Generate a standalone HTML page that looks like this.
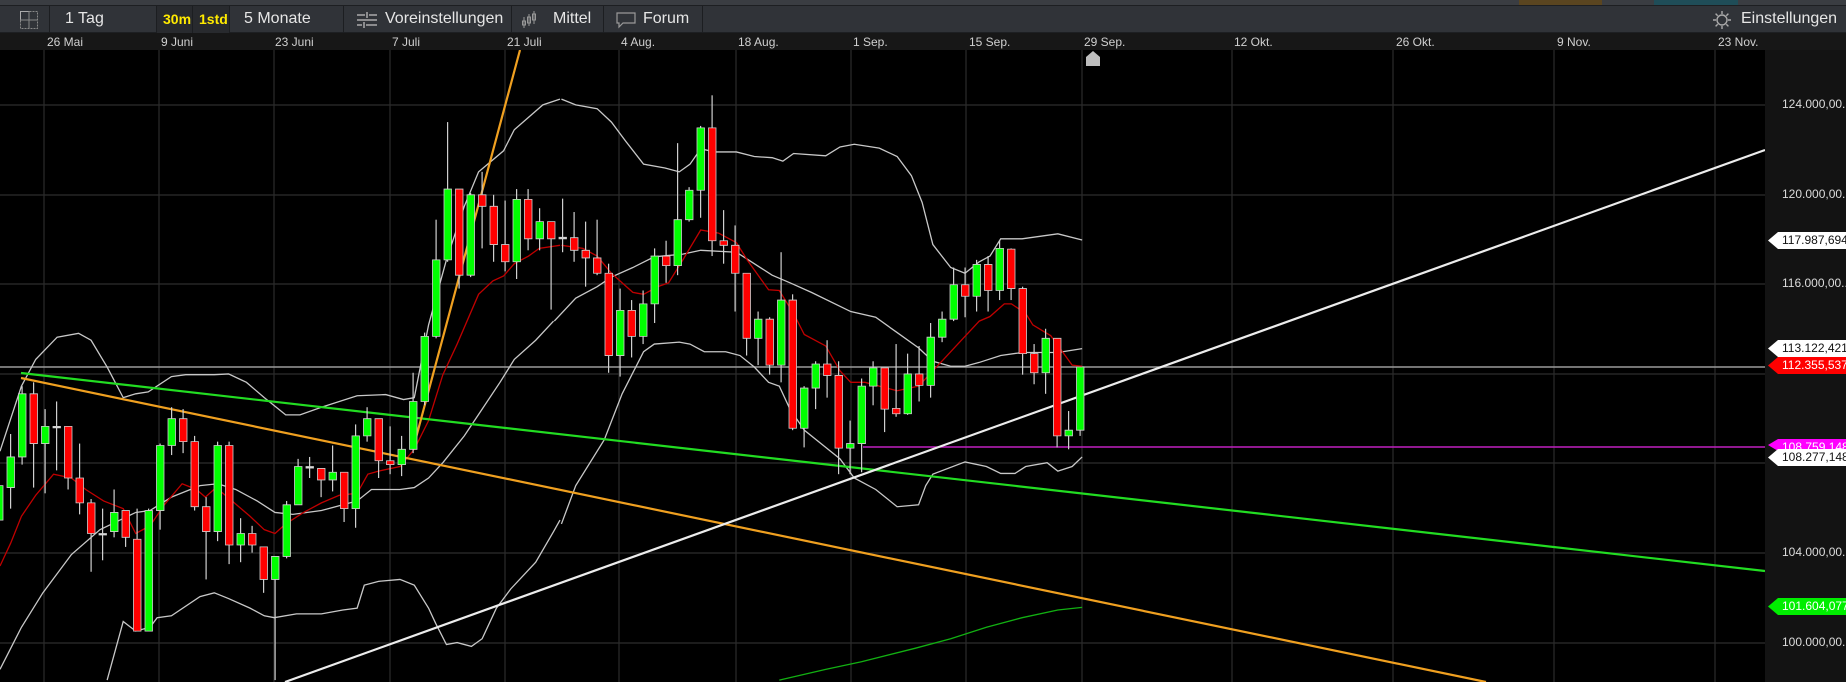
<!DOCTYPE html>
<html><head><meta charset="utf-8">
<style>
*{margin:0;padding:0;box-sizing:border-box}
html,body{width:1846px;height:682px;overflow:hidden;background:#000;font-family:"Liberation Sans",sans-serif}
.top{position:absolute;left:0;top:0;width:1846px;height:5px;background:#3a3d42}
.tb{position:absolute;left:0;top:5px;width:1846px;height:28px;background:#303338;border-top:1px solid #1d1f22;border-bottom:1px solid #1d1f22}
.tb span{position:absolute;top:4px;font-size:16px;color:#e6e6e6;white-space:nowrap}
.dv{position:absolute;top:0;width:1px;height:28px;background:#1c1e21}
.dates{position:absolute;left:0;top:33px;width:1846px;height:17px;background:#171717}
.dates span{position:absolute;top:2px;font-size:12px;color:#d0d0d0}
.axis{position:absolute;left:1765px;top:50px;width:81px;height:632px;background:#131313}
.al{position:absolute;left:1782px;font-size:12px;color:#dcdcdc}
.tag{position:absolute;left:1768px;width:78px;height:17px;font-size:12px;line-height:17px;padding-left:14px;clip-path:polygon(0 50%,10px 0,100% 0,100% 100%,10px 100%)}
</style></head><body>
<div class="top"></div>
<div style="position:absolute;left:1519px;top:0;width:83px;height:5px;background:#5a4520"></div>
<div style="position:absolute;left:1654px;top:0;width:84px;height:5px;background:#1f4d58"></div>
<div class="tb">
 <svg style="position:absolute;left:20px;top:5px" width="18" height="18" viewBox="0 0 18 18"><rect x="0.5" y="0.5" width="17" height="17" fill="none" stroke="#888" stroke-dasharray="2 1"/><rect x="0.5" y="0.5" width="8.5" height="8.5" fill="none" stroke="#aaa"/><line x1="9" y1="0" x2="9" y2="18" stroke="#888"/><line x1="0" y1="9" x2="18" y2="9" stroke="#888"/></svg>
 <div class="dv" style="left:49px"></div>
 <span style="left:65px">1 Tag</span>
 <div class="dv" style="left:156px"></div>
 <div style="position:absolute;left:157px;top:0;width:72px;height:27px;background:#282a2e"></div>
 <span style="left:163px;color:#ffea00;font-weight:bold;font-size:14px;top:5px">30m</span>
 <div class="dv" style="left:192px"></div>
 <span style="left:199px;color:#ffea00;font-weight:bold;font-size:14px;top:5px">1std</span>
 <div class="dv" style="left:229px"></div>
 <span style="left:244px">5 Monate</span>
 <div class="dv" style="left:343px"></div>
 <svg style="position:absolute;left:357px;top:6px" width="20" height="16" viewBox="0 0 20 16" stroke="#aaa" stroke-width="1.5"><line x1="0" y1="3" x2="8" y2="3"/><line x1="12" y1="3" x2="20" y2="3"/><line x1="10" y1="0" x2="10" y2="6"/><line x1="0" y1="8" x2="20" y2="8"/><line x1="0" y1="13" x2="5" y2="13"/><line x1="9" y1="13" x2="20" y2="13"/><line x1="7" y1="10" x2="7" y2="16"/></svg>
 <span style="left:385px">Voreinstellungen</span>
 <div class="dv" style="left:511px"></div>
 <svg style="position:absolute;left:521px;top:5px" width="18" height="18" viewBox="0 0 18 18" stroke="#999" fill="none"><line x1="3" y1="6" x2="3" y2="17"/><rect x="1.5" y="10" width="3" height="4"/><line x1="8" y1="3" x2="8" y2="15"/><rect x="6.5" y="6" width="3" height="6"/><line x1="13" y1="0" x2="13" y2="13"/><rect x="11.5" y="3" width="3" height="6"/></svg>
 <span style="left:553px">Mittel</span>
 <div class="dv" style="left:603px"></div>
 <svg style="position:absolute;left:616px;top:6px" width="20" height="17" viewBox="0 0 20 17" fill="none" stroke="#999" stroke-width="1.2"><path d="M1 1H19V11H7L3 15V11H1Z"/></svg>
 <span style="left:643px">Forum</span>
 <div class="dv" style="left:702px"></div>
 <svg style="position:absolute;left:1713px;top:5px" width="18" height="18" viewBox="0 0 18 18" fill="none" stroke="#aaa" stroke-width="1.4"><circle cx="9" cy="9" r="5"/><path d="M9 0v3M9 15v3M0 9h3M15 9h3M2.6 2.6l2.1 2.1M13.3 13.3l2.1 2.1M2.6 15.4l2.1-2.1M13.3 4.7l2.1-2.1"/></svg>
 <span style="left:1741px">Einstellungen</span>
</div>
<div class="dates">
 <span style="left:47px">26 Mai</span><span style="left:161px">9 Juni</span><span style="left:275px">23 Juni</span><span style="left:392px">7 Juli</span><span style="left:507px">21 Juli</span><span style="left:621px">4 Aug.</span><span style="left:738px">18 Aug.</span><span style="left:853px">1 Sep.</span><span style="left:969px">15 Sep.</span><span style="left:1084px">29 Sep.</span><span style="left:1234px">12 Okt.</span><span style="left:1396px">26 Okt.</span><span style="left:1557px">9 Nov.</span><span style="left:1718px">23 Nov.</span>
</div>
<svg style="position:absolute;left:0;top:50px" width="1765" height="632" viewBox="0 50 1765 632">
 <rect x="0" y="50" width="1765" height="632" fill="#000"/>
 <g stroke="#2c2c2c" stroke-width="1.2">
  <line x1="44" y1="50" x2="44" y2="682"/><line x1="159" y1="50" x2="159" y2="682"/><line x1="274" y1="50" x2="274" y2="682"/><line x1="390" y1="50" x2="390" y2="682"/><line x1="505" y1="50" x2="505" y2="682"/><line x1="619" y1="50" x2="619" y2="682"/><line x1="736" y1="50" x2="736" y2="682"/><line x1="851" y1="50" x2="851" y2="682"/><line x1="966" y1="50" x2="966" y2="682"/><line x1="1082" y1="50" x2="1082" y2="682"/><line x1="1232" y1="50" x2="1232" y2="682"/><line x1="1393" y1="50" x2="1393" y2="682"/><line x1="1554" y1="50" x2="1554" y2="682"/><line x1="1715" y1="50" x2="1715" y2="682"/>
  <line x1="0" y1="105" x2="1765" y2="105"/><line x1="0" y1="195" x2="1765" y2="195"/><line x1="0" y1="284" x2="1765" y2="284"/><line x1="0" y1="374" x2="1765" y2="374"/><line x1="0" y1="463" x2="1765" y2="463"/><line x1="0" y1="553" x2="1765" y2="553"/><line x1="0" y1="643" x2="1765" y2="643"/>
 </g>
 <line x1="0" y1="367" x2="1765" y2="367" stroke="#9a9a9a" stroke-width="1.5"/>
 <line x1="863" y1="447" x2="1765" y2="447" stroke="#c020c0" stroke-width="1.5"/>
 <g transform="translate(0,80) scale(0.35714,0.3827)" fill="none" stroke-width="1.3">
  <polyline vector-effect="non-scaling-stroke" stroke="#c8c8c8" points="0,970 60,800 100,730 160,672 220,662 255,680 300,750 345,830 380,820 415,815 480,775 520,770 600,770 640,768 690,790 740,830 800,875 840,875 900,855 1000,825 1080,822 1130,835 1160,830 1200,640 1250,470 1300,330 1340,240 1410,185 1440,130 1520,65 1568,50"/>
  <polyline vector-effect="non-scaling-stroke" stroke="#c8c8c8" points="0,1540 60,1430 120,1340 200,1240 280,1175 380,1130 420,1125 480,1090 560,1060 610,1055 660,1070 720,1100 770,1130 820,1135 900,1125 960,1110 1000,1100 1040,1070 1120,1070 1160,1065 1200,1040 1240,1000 1300,930 1350,860 1400,790 1440,730 1500,680 1550,630"/>
  <polyline vector-effect="non-scaling-stroke" stroke="#c8c8c8" points="300,1568 345,1415 380,1440 420,1430 440,1405 480,1400 560,1350 600,1340 640,1355 700,1380 740,1400 768,1405 830,1395 900,1395 960,1385 1000,1380 1020,1320 1060,1310 1120,1305 1160,1320 1200,1380 1220,1420 1250,1475 1280,1470 1320,1480 1350,1460 1390,1380 1430,1330 1500,1260 1550,1180 1568,1150"/>
  <polyline vector-effect="non-scaling-stroke" stroke="#c00000" points="0,1270 30,1210 60,1140 100,1085 150,1030 200,1040 240,1070 290,1100 345,1120 380,1185 420,1165 460,1110 510,1055 550,1070 575,1090 605,1065 650,1100 700,1140 740,1175 770,1185 800,1160 850,1130 900,1105 950,1085 1000,1080 1030,1030 1060,1022 1120,1010 1160,965 1200,890 1240,770 1280,690 1340,560 1380,525 1410,512 1440,480 1480,460 1510,440 1568,432"/>
 </g>
 <g transform="translate(540,80) scale(0.35714,0.3827)" fill="none" stroke-width="1.3">
  <polyline vector-effect="non-scaling-stroke" stroke="#c8c8c8" points="60,50 100,65 160,75 200,110 240,160 290,220 350,230 390,240 420,220 450,180 490,188 550,188 600,200 650,203 680,212 710,192 800,198 840,175 880,168 950,178 1000,200 1040,250 1070,320 1100,430 1150,490 1190,505 1230,475 1260,460 1290,415 1350,415 1450,402 1518,418"/>
  <polyline vector-effect="non-scaling-stroke" stroke="#c8c8c8" points="40,630 100,570 160,540 200,515 260,490 320,462 400,455 450,445 550,450 600,480 650,510 700,530 760,555 870,605 940,620 1000,660 1060,700 1100,735 1150,748 1190,748 1230,738 1290,720 1350,712 1450,712 1518,702"/>
  <polyline vector-effect="non-scaling-stroke" stroke="#c8c8c8" points="60,1160 100,1060 180,940 230,820 290,710 320,690 390,685 420,690 460,710 520,710 560,720 600,750 640,790 670,800 700,860 740,915 800,960 840,990 880,1040 940,1070 1000,1115 1060,1110 1080,1060 1100,1030 1190,998 1250,1010 1290,1028 1330,1028 1360,1010 1420,1000 1450,1022 1490,1010 1518,985"/>
  <polyline vector-effect="non-scaling-stroke" stroke="#c00000" points="60,432 120,440 160,460 200,505 260,555 290,560 330,540 360,530 400,470 450,392 500,400 550,425 580,470 640,548 670,550 710,610 740,665 800,695 840,760 870,790 910,790 950,800 1000,812 1060,800 1100,760 1140,720 1180,680 1230,630 1260,618 1300,585 1320,585 1360,610 1380,640 1430,668 1490,745 1518,748"/>
  <polyline vector-effect="non-scaling-stroke" stroke="#12b012" points="670,1568 800,1540 900,1520 1050,1485 1150,1460 1250,1430 1350,1405 1450,1385 1518,1378"/>
 </g>
 <line x1="21" y1="373" x2="1765" y2="571" stroke="#22dd22" stroke-width="2.2"/>
 <line x1="21" y1="378" x2="1486" y2="682" stroke="#f0a020" stroke-width="2.2"/>
 <line x1="413" y1="449" x2="520" y2="50" stroke="#f0a020" stroke-width="2.2"/>
 <line x1="285" y1="682" x2="1765" y2="150" stroke="#ececec" stroke-width="2.2"/>
 <path d="M1086 66V57L1093 51L1100 57V66Z" fill="#bdbdbd"/>
</svg>
<div class="axis"></div>
<div class="al" style="top:97px">124.000,00...</div>
<div class="al" style="top:187px">120.000,00...</div>
<div class="al" style="top:276px">116.000,00...</div>
<div class="al" style="top:545px">104.000,00...</div>
<div class="al" style="top:635px">100.000,00...</div>
<div class="tag" style="top:232px;background:#fff;color:#111">117.987,694</div>
<div class="tag" style="top:340px;background:#fff;color:#111">113.122,421</div>
<div class="tag" style="top:357px;background:#ff0000;color:#fff">112.355,537</div>
<div class="tag" style="top:439px;background:#ff00ff;color:#fff;height:12px">108.759,148</div>
<div class="tag" style="top:449px;background:#fff;color:#111">108.277,148</div>
<div class="tag" style="top:598px;background:#00ee00;color:#fff">101.604,077</div>
<svg style="position:absolute;left:0;top:0;width:1765px;height:682px;pointer-events:none" width="1765" height="682">
 <g transform="translate(0,80) scale(1,0.3827)" stroke="#d0d0d0" stroke-width="1">
  <g id="cc"></g>
 </g>
</svg>
<script>
var d=[
[0,'g',1060,1150,1040,1160],[1,'g',985,1065,925,1120],[2,'g',820,985,800,1005],[3,'r',820,950,790,1065],[4,'g',905,950,860,1080],[5,'d',905,908,840,1020],[6,'r',905,1040,905,1070],[7,'r',1040,1105,950,1135],[8,'r',1105,1185,1095,1285],[9,'d',1185,1188,1120,1255],[10,'g',1130,1180,1070,1195],[11,'r',1125,1195,1125,1220],[12,'r',1200,1440,1120,1440],[13,'g',1125,1440,1120,1440],[14,'g',955,1125,950,1175],[15,'g',885,955,855,980],[16,'r',885,945,860,975],[17,'r',945,1115,930,1125],[18,'r',1115,1180,1090,1305],[19,'g',955,1180,945,1205],[20,'r',955,1215,945,1265],[21,'g',1185,1215,1145,1260],[22,'r',1185,1215,1165,1235],[23,'r',1220,1305,1220,1340],[24,'g',1245,1305,1245,1568],[25,'g',1110,1245,1100,1250],[26,'g',1010,1110,990,1110],[27,'d',1010,1014,985,1040],[28,'r',1015,1045,1015,1090],[29,'g',1025,1045,955,1075],[30,'r',1025,1120,1025,1155],[31,'g',930,1120,900,1170],[32,'g',885,930,855,945],[33,'r',885,995,885,1040],[34,'r',995,1005,905,1030],[35,'g',965,1005,930,1035],[36,'g',840,965,765,975],[37,'g',670,840,660,850],[38,'g',470,670,365,675],[39,'g',285,470,110,475],[40,'r',285,510,285,545],[41,'g',300,510,295,515],[42,'r',300,330,240,440],[43,'r',330,430,300,475],[44,'r',430,475,315,500],[45,'g',312,475,285,520],[46,'r',312,415,285,445],[47,'g',370,415,335,445],[48,'r',370,415,370,600],
[49,'d',411,415,310,450],[50,'r',412,445,345,475],[51,'r',445,465,370,540],[52,'r',465,505,365,510],[53,'r',505,720,480,765],[54,'g',602,720,545,775],[55,'r',602,670,575,725],[56,'g',585,670,550,690],[57,'g',460,585,440,635],[58,'r',460,485,420,530],[59,'g',365,485,165,510],[60,'g',288,365,280,370],[61,'g',125,288,120,360],[62,'r',125,420,40,460],[63,'r',420,432,340,480],[64,'r',432,505,380,605],[65,'r',505,675,505,720],[66,'g',625,675,605,745],[67,'r',625,745,620,770],[68,'g',575,745,450,790],[69,'r',575,910,560,915],[70,'g',805,910,800,960],[71,'g',742,805,735,860],[72,'r',742,772,680,830],[73,'r',772,962,735,1030],[74,'g',950,962,890,1030],[75,'g',800,950,780,1025],[76,'g',752,800,735,850],[77,'r',752,860,752,920],[78,'r',858,872,690,880],[79,'g',768,872,715,875],[80,'r',768,798,695,840],[81,'g',672,798,635,830],[82,'g',625,672,605,685],[83,'g',535,625,490,630],[84,'r',535,565,490,620],[85,'g',482,565,470,605],[86,'r',482,550,460,605],[87,'g',440,550,420,575],[88,'r',442,545,440,575],[89,'r',545,715,540,770],[90,'r',715,765,690,795],[91,'g',675,765,650,820],[92,'r',675,930,675,960],[93,'g',915,930,865,965],[94,'g',750,915,750,930]];
var g=document.getElementById('cc'),h='';
d.forEach(function(c){var x=11.5*c[0]-1;var col=c[1]=='g'?'#00ff00':c[1]=='r'?'#ff0000':'#ddd';
h+='<rect x="'+(x-0.5)+'" y="'+c[4]+'" width="1.2" height="'+(c[5]-c[4])+'" fill="#cfcfcf" stroke="none"/>';
h+='<rect x="'+(x-3.5)+'" y="'+c[2]+'" width="7.5" height="'+Math.max(c[3]-c[2],4)+'" fill="'+col+'" stroke="#cfcfcf" stroke-width="0.8" vector-effect="non-scaling-stroke"/>';});
g.innerHTML=h;
</script>
</body></html>
